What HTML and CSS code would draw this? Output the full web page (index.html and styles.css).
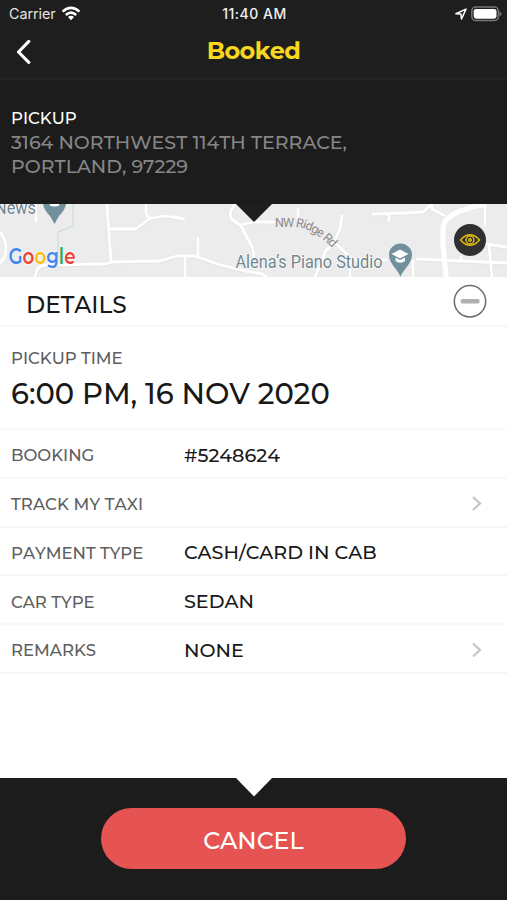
FILE: index.html
```html
<!DOCTYPE html>
<html lang="en">
<head>
<meta charset="utf-8">
<title>Booked</title>
<link rel="stylesheet" href="styles.css">
</head>
<body>
<div class="screen">
  <header class="top">
    <div class="status">
      <div class="carrier"><span>Carrier</span>
        <svg width="20" height="15" viewBox="0 0 20 15"><g fill="none" stroke="#fff" stroke-width="2.5"><path d="M1.6 5.6Q10-1.9 18.4 5.6"/><path d="M4.8 9Q10 4.3 15.2 9"/></g><path d="M7 11.1Q10 8.6 13 11.1L10 14.2Z" fill="#fff"/></svg>
      </div>
      <span class="clock">11:40 AM</span>
      <div class="battery">
        <svg width="12" height="12" viewBox="0 0 12 12"><path d="M.9 5.7 11 1.1 6.5 11 5.9 6.1Z" fill="none" stroke="#fff" stroke-width="1.5" stroke-linejoin="round"/></svg>
        <svg width="31" height="16" viewBox="0 0 31 16"><rect x=".8" y="1" width="26.6" height="13.6" rx="4.2" fill="none" stroke="#77777a" stroke-width="1.5"/><rect x="2.7" y="2.9" width="22.8" height="9.8" rx="2.4" fill="#fff"/><path d="M28.5 5.4Q30.6 6 30.6 7.8T28.5 10.2Z" fill="#77777a"/></svg>
      </div>
    </div>
    <nav class="nav">
      <svg class="back" width="18" height="26" viewBox="0 0 18 26"><path d="M14.8 3.4 4.500 14l10.300 10.400" fill="none" stroke="#fff" stroke-width="3.1" stroke-linecap="round" stroke-linejoin="round"/></svg>
      <h1 class="title">Booked</h1>
      <span></span>
    </nav>
  </header>
  <section class="pickup">
    <h2 class="pickup-label">PICKUP</h2>
    <p class="address">3164 NORTHWEST 114TH TERRACE,<br>PORTLAND, 97229</p>
  </section>
  <section class="map">
    <svg class="map-art" width="507" height="73" viewBox="0 0 507 73">
      <defs>
        <g id="roads">
          <path d="M-2 26Q6 34 6 45T-2 60M107 0 109 29 111 57M109 25H136L149 15 146 9V0M149 15Q160 11 173 13L185 15M35 73 37 66Q39 62 46 61L105 60 112 58 160 57 177 52 195 52 217 60 245 67 262 70 267 73M198 52V33M185 53V73M36 18V0M235 0Q226 12 234 17L241 22 252 43Q256 52 251 60M241 21 254 18H275M298 4V17M372 10 405 9 423 8 432 0M389 10V18M432 0V5L445 12M342 11 340 25 334 38 325 48 321 60 315 73M334 38 350 53V73M350 56H387M416 55 438 56 507 59M413 56V73M461 57V52M485 0V22M486 40 507 43M489 42 492 73"/>
          <path d="M485 0Q443 9 443 24V40L446 73" stroke-width="5.500"/>
        </g>
      </defs>
      <rect width="507" height="73" fill="#ececec"/>
      <path d="M58 28V53M58 28 73 22V0" fill="none" stroke="#cfe0d8" stroke-width="1.5"/>
      <g fill="none" stroke="#e3e3e3" stroke-width="3.800" stroke-linejoin="round"><use href="#roads" y=".500"/></g>
      <g fill="none" stroke="#fff" stroke-width="2.8" stroke-linejoin="round"><use href="#roads"/></g>
      <path d="M43 0H66Q65 6 59 12L54.500 20 50 12Q44 6 43 0Z" fill="#71909d"/>
      <ellipse cx="54.500" cy="0" rx="5" ry="2.500" fill="#fff"/>
      <path d="M400.500 73C398 65 389 60 389 51A11.500 11.500 0 0 1 412 51C412 60 403 65 400.500 73Z" fill="#71909d"/>
      <path d="M400 45.500 408.500 50 400 54.500 391.500 50ZM395.500 53.500 400 56 405 53.500V57Q400 60.500 395.500 57Z" fill="#fff"/>
      <g class="place">
        <text x="-5" y="10" textLength="41" lengthAdjust="spacingAndGlyphs">News</text>
        <text x="235.500" y="63.500" textLength="147" lengthAdjust="spacingAndGlyphs">Alena’s Piano Studio</text>
      </g>
      <path id="ridge" d="M275 23H292Q312 22 334 46" fill="none"/>
      <text class="road"><textPath href="#ridge" textLength="64">NW Ridge Rd</textPath></text>
      <text class="google" x="8.500" y="60" textLength="67" lengthAdjust="spacingAndGlyphs"><tspan fill="#4285f4">G</tspan><tspan fill="#ea4335">o</tspan><tspan fill="#fbbc05">o</tspan><tspan fill="#4285f4">g</tspan><tspan fill="#34a853">l</tspan><tspan fill="#ea4335">e</tspan></text>
      <path d="M236 0H272L254 18Z" fill="#1e1e1e"/>
      <circle cx="470" cy="36" r="16" fill="#303030"/>
      <g fill="none" stroke="#dcb912" stroke-width="1.500"><path d="M460.500 36Q470 25.500 479.500 36Q470 46.500 460.500 36Z"/><circle cx="470" cy="36" r="4"/><circle cx="470" cy="36" r="1.300"/></g>
    </svg>
  </section>
  <main class="details">
    <div class="details-head">
      <h2 class="details-title">DETAILS</h2>
      <svg width="34" height="34" viewBox="0 0 34 34"><circle cx="17" cy="17.300" r="15.700" fill="none" stroke="#6c6c6c" stroke-width="1.500"/><rect x="7.700" y="15" width="18.800" height="4.600" rx="1.500" fill="#b0b0b0"/></svg>
    </div>
    <div class="time">
      <span class="label time-label">PICKUP TIME</span>
      <strong class="time-value">6:00 PM, 16 NOV 2020</strong>
    </div>
    <div class="row"><span class="label">BOOKING</span><span class="value">#5248624</span></div>
    <div class="row"><span class="label track">TRACK MY TAXI</span><span></span><svg class="chevron" width="12" height="18" viewBox="0 0 12 18"><path d="M2 2 9 8.500 2 15" fill="none" stroke="#c4c4c4" stroke-width="2.200"/></svg></div>
    <div class="row"><span class="label">PAYMENT TYPE</span><span class="value">CASH/CARD IN CAB</span></div>
    <div class="row"><span class="label">CAR TYPE</span><span class="value">SEDAN</span></div>
    <div class="row"><span class="label">REMARKS</span><span class="value">NONE</span><svg class="chevron" width="12" height="18" viewBox="0 0 12 18"><path d="M2 2.500 9 9 2 15.500" fill="none" stroke="#c4c4c4" stroke-width="2.200"/></svg></div>
  </main>
  <footer class="footer">
    <svg class="notch" width="36" height="19" viewBox="0 0 36 19"><path d="M0 0H36L18 18.500Z" fill="#fff"/></svg>
    <button class="cancel">CANCEL</button>
  </footer>
</div>
</body>
</html>
```

FILE: styles.css
```css
* { box-sizing: border-box; }
body { margin: 0; background: #fff; }
h1, h2, p { margin: 0; font-weight: 500; }
svg { display: block; flex: none; }
.screen { width: 507px; height: 900px; display: flex; flex-direction: column; overflow: hidden; background: #fff; color: #181818; font-family: Montserrat, Inter, sans-serif; font-kerning: none; white-space: nowrap; }
.top { height: 80px; flex: none; background: #1e1e1e; color: #fff; border-bottom: 2px solid #242424; }
.status { height: 27px; display: grid; grid-template-columns: 1fr auto 1fr; align-items: center; padding: 0 5px 0 9px; font-family: Inter, sans-serif; font-size: 14.4px; }
.carrier { display: flex; align-items: center; gap: 5px; color: #e2e2e2; }
.clock { font-weight: 500; font-size: 14px; letter-spacing: .5px; color: #f0f0f0; transform: translateX(-1px); }
.battery { display: flex; align-items: center; justify-content: flex-end; gap: 4px; }
.nav { height: 48px; display: grid; grid-template-columns: 1fr auto 1fr; align-items: center; padding: 0 14px; }
.title { color: #f8d71c; font-size: 24px; font-weight: 700; letter-spacing: -.6px; padding-bottom: 1px; }
.pickup { height: 124px; flex: none; padding: 27px 11px 0; background: #1c1c1c; }
.pickup-label { color: #fff; font-size: 16.5px; line-height: 22px; }
.address { margin-top: 2px; color: #868686; font-size: 19px; line-height: 23.6px; }
.map { height: 73px; flex: none; }
.place { font: 17.5px Roboto, sans-serif; fill: #71868f; stroke: #fff; stroke-width: 1.2px; paint-order: stroke; }
.road { font: 12.5px Roboto, sans-serif; fill: #8b8b8b; }
.google { font: 600 22px Montserrat, sans-serif; stroke: #fff; stroke-width: 1px; paint-order: stroke; }
.details { flex: none; }
.details-head { height: 50px; display: flex; align-items: center; justify-content: space-between; padding: 0 20px 0 26px; border-bottom: 2px solid #f6f6f6; }
.details-title { font-size: 23.2px; padding-top: 8px; }
.time { height: 103px; display: flex; flex-direction: column; padding: 20px 11px 0; border-bottom: 2px solid #f9f9f9; }
.label { color: #5e5e5e; font-size: 16.5px; font-weight: 500; }
.track { letter-spacing: .12px; }
.time-label { line-height: 22px; }
.time-value { margin-top: 7px; font-size: 29px; line-height: 36px; font-weight: 500; }
.row { height: 48.8px; display: grid; grid-template-columns: 173px 1fr auto; align-items: center; padding: 3.6px 24px 0 11px; border-bottom: 2px solid #f7f7f7; }
.value { font-size: 19.1px; font-weight: 500; }
.footer { height: 122px; flex: none; margin-top: auto; display: flex; flex-direction: column; align-items: center; background: #1c1c1c; }
.cancel { width: 305px; height: 61px; margin-top: 11px; padding: 3px 0 0; border: 0; border-radius: 31px; background: #e65353; color: #fff; font: 500 23.8px Montserrat, Inter, sans-serif; }
```
